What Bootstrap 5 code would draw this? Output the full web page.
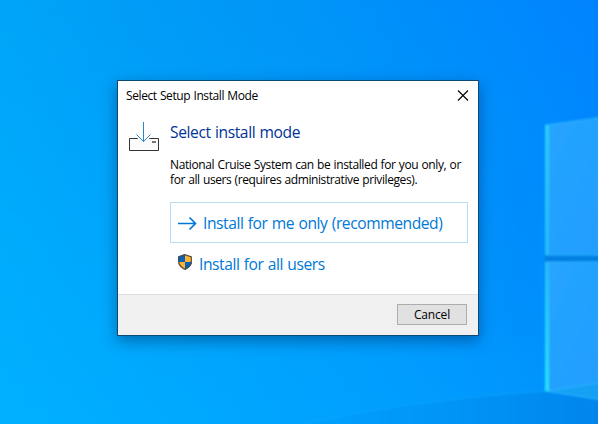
<!DOCTYPE html>
<html lang="en">
<head>
<meta charset="utf-8">
<meta name="viewport" content="width=device-width, initial-scale=1">
<title>Select Setup Install Mode</title>
<link href="https://cdn.jsdelivr.net/npm/bootstrap@5.3.0/dist/css/bootstrap.min.css" rel="stylesheet">
<style>
body { width: 598px; height: 424px; background: #0094f8; font-family: "Open Sans", "Noto Sans", sans-serif; font-size: 12px; line-height: 15px; color: #000; }
.wallpaper { inset: 0; width: 598px; height: 424px; }
.desktop { padding: 80px 0 0 117px; }
.setup-window { width: 362px; height: 256px; border: 1px solid #0b4a75; box-shadow: 0 5px 14px rgba(0,25,70,.42); }
.titlebar { height: 30px; padding: 0 9px 0 8px; }
.title-text { letter-spacing: -.4px; word-spacing: .5px; padding-bottom: 2px; }
.setup-body { padding: 11px 10px 0 10px; height: 183px; gap: 10px; }
.drive-icon { width: 32px; height: 32px; }
.heading { font-size: 15.6px; line-height: 20px; color: #003399; letter-spacing: -.4px; word-spacing: .7px; }
.message { margin-top: 15px; margin-bottom: 15px; letter-spacing: -.38px; word-spacing: .5px; white-space: nowrap; }
.message span { display: block; }
.message .second { letter-spacing: -.4px; }
.choice { height: 41px; width: 298px; border: 1px solid transparent; border-radius: 0; padding: 0 7px; color: #0078d7; font-size: 15.6px; line-height: 22px; letter-spacing: -.43px; word-spacing: .7px; white-space: nowrap; background: none; }
.choice-default { border-color: #b9dcf6; }
.choice-label { margin-left: 1px; }
.shield-label { margin-left: 7px; }
.footer-bar { height: 41px; background: #f0f0f0; border-top: 1px solid #dfdfdf; padding: 9px 11px 0 0; }
.cancel { width: 70px; height: 21px; padding: 0; border: 1px solid #adadad; background: #e1e1e1; color: #000; border-radius: 0; font-size: 12px; line-height: 18px; letter-spacing: -.15px; }
</style>
<script src="https://cdn.jsdelivr.net/npm/bootstrap@5.3.0/dist/js/bootstrap.bundle.min.js"></script>
</head>
<body class="overflow-hidden position-relative m-0">
<svg class="wallpaper position-absolute" viewBox="0 0 598 424" aria-hidden="true">
  <defs>
    <linearGradient id="sky">
      <stop offset="0" stop-color="#00a5f8"/><stop offset=".25" stop-color="#009cf7"/><stop offset=".5" stop-color="#0095f8"/><stop offset=".75" stop-color="#008dfb"/><stop offset="1" stop-color="#0083ff"/>
    </linearGradient>
    <linearGradient id="ground">
      <stop offset="0" stop-color="#00b1ff"/><stop offset=".3" stop-color="#00a9fe"/><stop offset=".7" stop-color="#009eff"/><stop offset="1" stop-color="#0092fb"/>
    </linearGradient>
    <linearGradient id="fade" x1="0" y1="0" x2="0" y2="1"><stop offset="0" stop-color="#000"/><stop offset="1" stop-color="#fff"/></linearGradient>
    <mask id="fall"><rect width="598" height="424" fill="url(#fade)"/></mask>
    <linearGradient id="ray"><stop offset="0" stop-color="#00a1ff"/><stop offset=".5" stop-color="#0094f7"/><stop offset="1" stop-color="#0084ec"/></linearGradient>
    <linearGradient id="pane" x1="0" y1="0" x2="1" y2="1"><stop offset="0" stop-color="#26a5ff"/><stop offset="1" stop-color="#219dff"/></linearGradient>
    <linearGradient id="edge" x1="0" y1="0" x2="0" y2="1"><stop offset="0" stop-color="#2ccbff"/><stop offset=".5" stop-color="#26baff"/><stop offset="1" stop-color="#29dfff"/></linearGradient>
    <filter id="soft" x="-20%" y="-20%" width="140%" height="140%"><feGaussianBlur stdDeviation=".8"/></filter>
    <filter id="wide" filterUnits="userSpaceOnUse" x="400" y="60" width="198" height="364"><feGaussianBlur stdDeviation="14"/></filter>
  </defs>
  <rect width="598" height="424" fill="url(#sky)"/>
  <rect width="598" height="424" fill="url(#ground)" mask="url(#fall)"/>
  <path d="M520 160V340" stroke="#0088f6" stroke-width="40" opacity=".35" filter="url(#wide)"/>
  <path d="M300 424Q420 399 545 391L610 402V434H300Z" fill="url(#ray)" filter="url(#soft)"/>
  <path d="M300 424Q420 399 545 391" fill="none" stroke="#10a8ff" stroke-width="2" opacity=".4" filter="url(#soft)"/>
  <g filter="url(#soft)">
    <path d="M545 125L604 117V255H545Z" fill="url(#pane)"/>
    <path d="M545 262H604V400L545 391Z" fill="url(#pane)"/>
    <path d="M545 391L604 383V400Z" fill="#15a0f4"/>
    <path d="M545 255H604V262H545Z" fill="#007fe2"/>
    <path d="M546 125L604 117M546 255H604M546 262H604M546 391L604 400M546 391L604 382" fill="none" stroke="#2bb5ff" stroke-width="1"/>
    <path d="M545 125H549V255H545ZM545 262H549V391H545Z" fill="url(#edge)"/>
  </g>
</svg>
<main class="desktop position-relative">
  <section class="setup-window bg-white d-flex flex-column" role="dialog" aria-label="Select Setup Install Mode">
    <header class="titlebar d-flex align-items-center justify-content-between">
      <span class="title-text">Select Setup Install Mode</span>
      <svg width="12" height="12" viewBox="0 0 12 12" aria-hidden="true"><path d="M1 .5L11 10.5M11 .5L1 10.5" stroke="#000" stroke-width="1.1" fill="none"/></svg>
    </header>
    <div class="setup-body d-flex">
      <svg class="drive-icon flex-shrink-0" viewBox="0 0 32 32" aria-hidden="true">
        <path d="M10 16.500H1.500V28.500H30.500V16.500H21" fill="#fbfbfb" stroke="#333" stroke-width="1"/>
        <path d="M9 16.500L15.500 20L22 16.500" fill="#fbfbfb"/>
        <path d="M15.500 0V20M8.500 12.500L15.500 19.500L22.500 12.500" fill="none" stroke="#2b86c8" stroke-width="1"/>
        <path d="M24 19H28V21H24Z" fill="#777"/>
      </svg>
      <div>
        <h1 class="heading fw-normal mb-0">Select install mode</h1>
        <p class="message"><span>National Cruise System can be installed for you only, or</span><span class="second">for all users (requires administrative privileges).</span></p>
        <button class="choice choice-default btn d-flex align-items-center" type="button">
          <svg class="me-1" width="20" height="16" viewBox="0 0 20 16" aria-hidden="true"><path d="M0 8.500H17M11.500 2.500L17.500 8.500L11.500 14.500" fill="none" stroke="#0078d7" stroke-width="1.700"/></svg>
          <span class="choice-label">Install for me only (recommended)</span>
        </button>
        <button class="choice btn d-flex align-items-center" type="button">
          <svg class="flex-shrink-0 mb-1" width="14" height="16" viewBox="0 0 14 16" aria-hidden="true">
            <path d="M7 0L0 2.500V7C0 11 3 14 7 16Z" fill="#0861bd"/>
            <path d="M7 0L14 2.500V7C14 11 11 14 7 16Z" fill="#ffb52b"/>
            <path d="M0 8H7V16C3 14 0 11 0 8Z" fill="#ffb52b"/><path d="M14 8H7V16C11 14 14 11 14 8Z" fill="#0861bd"/>
            <path d="M7 .700L13.300 2.900V7C13.300 10.800 10.700 13.500 7 15.300C3.300 13.500 .700 10.800 .700 7V2.900Z" fill="none" stroke="#4a4a4a" stroke-width="1.100"/>
          </svg>
          <span class="shield-label">Install for all users</span>
        </button>
      </div>
    </div>
    <footer class="footer-bar d-flex justify-content-end align-items-start">
      <button class="cancel btn" type="button">Cancel</button>
    </footer>
  </section>
</main>
</body>
</html>
